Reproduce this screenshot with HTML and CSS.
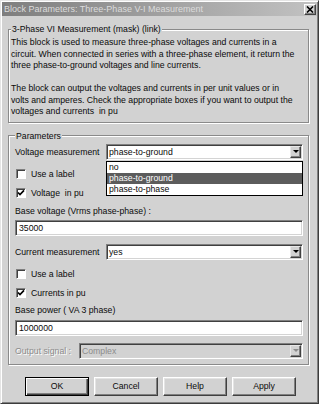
FILE: index.html
```html
<!doctype html>
<html>
<head>
    <meta charset="utf-8">
    <title>Block Parameters</title>
    <link rel="stylesheet" href="styles.css">
</head>
<body>
<div class="window">
	<div class="titlebar">
		<span class="title">Block Parameters: Three-Phase V-I Measurement</span>
		<span class="close">
			<svg width="8" height="7" viewBox="0 0 8 7"><path d="M1 0.5 L7 6.5 M7 0.5 L1 6.5" stroke="#000" stroke-width="1.6"/></svg>
		</span>
	</div>

	<fieldset class="group desc">
		<legend>3-Phase VI Measurement (mask) (link)</legend>
		<p>This block is used to measure three-phase voltages and currents in a<br>circuit. When connected in series with a three-phase element, it return the<br>three phase-to-ground voltages and line currents.</p>
		<p class="gap">The block can output the voltages and currents in per unit values or in<br>volts and amperes. Check the appropriate boxes if you want to output the<br>voltages and currents&nbsp; in pu</p>
	</fieldset>

	<fieldset class="group params">
		<legend>Parameters</legend>

		<div class="field">
			<span class="label">Voltage measurement</span>
			<div class="combo">
				<span class="value">phase-to-ground</span>
				<span class="arrow"><i></i></span>
				<ul class="droplist">
					<li>no</li>
					<li class="hl">phase-to-ground</li>
					<li>phase-to-phase</li>
				</ul>
			</div>
		</div>
		<div class="check first"><span class="box"></span>Use a label</div>
		<div class="check"><span class="box on"><svg width="8" height="8" viewBox="0 0 8 8"><path d="M1 3.5 L3 5.6 L7 1.4" fill="none" stroke="#000" stroke-width="1.7"/></svg></span>Voltage&nbsp; in pu</div>
		<div class="caption">Base voltage (Vrms phase-phase) :</div>
		<div class="edit">35000</div>

		<div class="field second">
			<span class="label">Current measurement</span>
			<div class="combo">
				<span class="value">yes</span>
				<span class="arrow"><i></i></span>
			</div>
		</div>
		<div class="check first"><span class="box"></span>Use a label</div>
		<div class="check"><span class="box on"><svg width="8" height="8" viewBox="0 0 8 8"><path d="M1 3.5 L3 5.6 L7 1.4" fill="none" stroke="#000" stroke-width="1.7"/></svg></span>Currents in pu</div>
		<div class="caption tight">Base power ( VA 3 phase)</div>
		<div class="edit lower">1000000</div>

		<div class="field third disabled">
			<span class="label short">Output signal :</span>
			<div class="combo">
				<span class="value">Complex</span>
				<span class="arrow"><i></i></span>
			</div>
		</div>
	</fieldset>

	<div class="buttons">
		<span class="btn default">OK</span>
		<span class="btn">Cancel</span>
		<span class="btn">Help</span>
		<span class="btn">Apply</span>
	</div>
</div>
</body>
</html>
```

FILE: styles.css
```css
*{margin: 0;padding: 0;box-sizing: border-box;list-style: none;}
body{background: #d2d2d2;font-family: "Liberation Sans", Arial, sans-serif;font-size: 8.7px;color: #0a0a0a;}

.window{
	width: 319px;height: 404px;padding: 1px;
	border: 1px solid;border-color: #e4e4e4 #3c3c3c #3c3c3c #e4e4e4;
	box-shadow: inset 1px 1px 0 #fff, inset -1px -1px 0 #808080;
}

/* title bar */
.titlebar{
	height: 14px;display: flex;align-items: center;justify-content: space-between;
	padding: 0 1px 0 2px;
	background: linear-gradient(to right, #7e7e7e, #c2c2c2);
}
.titlebar .title{color: #dcdcdc;white-space: nowrap;font-size: 9px;}
.titlebar .close{
	width: 12px;height: 11px;display: flex;align-items: center;justify-content: center;
	background: #d2d2d2;border: 1px solid;border-color: #fff #404040 #404040 #fff;
	box-shadow: inset -1px -1px 0 #808080;
}

/* group boxes */
.group{
	border: 1px solid #8a8a8a;
	box-shadow: inset 1px 1px 0 #fff, 1px 1px 0 #fff;
	margin: 7px 8px 0 6px;
}
.group legend{padding: 0 1px;line-height: 12px;background: #d2d2d2;}
.desc{padding: 2px 4px 4px 2px;}
.desc p{line-height: 11.5px;white-space: nowrap;}
.desc p.gap{margin-top: 11.5px;}

.params{padding: 2px 5px 5px 6px;}

.field{display: flex;align-items: center;height: 16px;}
.field.second{margin-top: 8px;}
.field.third{margin-top: 7px;}
.field .label{width: 91px;flex: none;white-space: nowrap;}
.field .label.short{width: 64px;}

.combo{
	flex: 1;height: 16px;position: relative;display: flex;align-items: center;
	padding: 1px 1px 1px 2px;background: #fff;
	border: 1px solid;border-color: #808080 #fff #fff #808080;
	box-shadow: inset 1px 1px 0 #404040, inset -1px -1px 0 #d4d4d4;
}
.combo .value{flex: 1;}
.combo .arrow{
	width: 11px;height: 12px;display: flex;align-items: center;justify-content: center;
	background: #d2d2d2;border: 1px solid;border-color: #e8e8e8 #404040 #404040 #e8e8e8;
	box-shadow: inset -1px -1px 0 #808080;
}
.combo .arrow i{width: 0;height: 0;border-left: 3px solid transparent;border-right: 3px solid transparent;border-top: 3px solid #000;}

.droplist{
	position: absolute;left: -1px;right: -1px;top: 16px;
	border: 1px solid #000;background: #fff;z-index: 2;
}
.droplist li{height: 11px;line-height: 11px;padding-left: 2px;}
.droplist li.hl{background: #5c5c5c;color: #fff;}

.disabled .label{color: #8c8c8c;text-shadow: 1px 1px 0 #fff;}
.disabled .combo{background: #d2d2d2;color: #8c8c8c;}
.disabled .combo .arrow i{border-top-color: #8c8c8c;}

.check{display: flex;align-items: center;height: 19px;white-space: nowrap;}
.check.first{margin-top: 5px;}
.check .box{
	width: 10px;height: 10px;margin: 0 5px 0 1px;background: #fff;
	display: flex;align-items: center;justify-content: center;
	border: 1px solid;border-color: #808080 #fff #fff #808080;
	box-shadow: inset 1px 1px 0 #404040;
}

.caption{height: 13px;line-height: 13px;margin-top: 2px;white-space: nowrap;}
.caption.tight{margin-top: 1px;}

.edit{
	height: 16px;line-height: 14px;padding-left: 3px;margin-top: 2px;background: #fff;
	border: 1px solid;border-color: #808080 #fff #fff #808080;
	box-shadow: inset 1px 1px 0 #404040, inset -1px -1px 0 #d4d4d4;
}
.edit.lower{margin-top: 3px;}

/* buttons */
.buttons{display: flex;gap: 5px;margin: 12px 0 0 23px;}
.btn{
	width: 64px;height: 19px;display: flex;align-items: center;justify-content: center;
	background: #d2d2d2;border: 1px solid;border-color: #fff #404040 #404040 #fff;
	box-shadow: inset -1px -1px 0 #808080, inset 1px 1px 0 #e4e4e4;
}
.btn.default{
	border-color: #000;
	box-shadow: inset 1px 1px 0 #fff, inset -1px -1px 0 #404040, inset -2px -2px 0 #808080;
}
```
